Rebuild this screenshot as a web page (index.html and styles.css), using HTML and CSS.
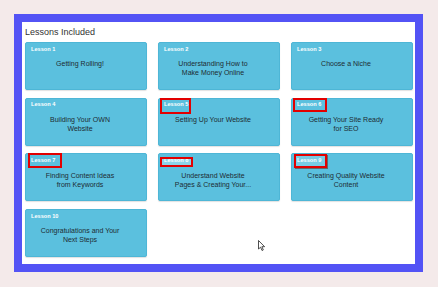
FILE: index.html
```html
<!DOCTYPE html>
<html lang="en">
<head>
    <meta charset="UTF-8">
    <title>Lessons Included</title>
    <link rel="stylesheet" href="styles.css">
</head>
<body>
    <div class="frame">
        <div class="panel">
            <h2>Lessons Included</h2>
            <div class="lessons">
                <div class="card">
                    <div class="label">Lesson 1</div>
                    <div class="title">Getting Rolling!</div>
                </div>
                <div class="card">
                    <div class="label">Lesson 2</div>
                    <div class="title">Understanding How to Make Money Online</div>
                </div>
                <div class="card">
                    <div class="label">Lesson 3</div>
                    <div class="title">Choose a Niche</div>
                </div>
                <div class="card">
                    <div class="label">Lesson 4</div>
                    <div class="title">Building Your OWN Website</div>
                </div>
                <div class="card">
                    <div class="label">Lesson 5</div>
                    <div class="title">Setting Up Your Website</div>
                    <span class="mark mark-5"></span>
                </div>
                <div class="card">
                    <div class="label">Lesson 6</div>
                    <div class="title">Getting Your Site Ready for SEO</div>
                    <span class="mark mark-6"></span>
                </div>
                <div class="card">
                    <div class="label">Lesson 7</div>
                    <div class="title">Finding Content Ideas from Keywords</div>
                    <span class="mark mark-7"></span>
                </div>
                <div class="card">
                    <div class="label">Lesson 8</div>
                    <div class="title">Understand Website Pages &amp; Creating Your...</div>
                    <span class="mark mark-8"></span>
                </div>
                <div class="card">
                    <div class="label">Lesson 9</div>
                    <div class="title">Creating Quality Website Content</div>
                    <span class="mark mark-9"></span>
                </div>
                <div class="card">
                    <div class="label">Lesson 10</div>
                    <div class="title">Congratulations and Your Next Steps</div>
                </div>
            </div>

            <!-- mouse pointer -->
            <svg class="cursor" width="8" height="12" viewBox="0 0 8 12">
                <path d="M0.5 0.5 L0.5 9 L2.6 7.2 L4 10.5 L5.3 9.9 L3.9 6.7 L6.6 6.7 Z" fill="#fff" stroke="#222" stroke-width="0.8"/>
            </svg>
        </div>
    </div>
</body>
</html>
```

FILE: styles.css
```css
* {
    margin: 0;
    padding: 0;
    box-sizing: border-box;
}

body {
    font-family: 'Liberation Sans', Arial, sans-serif;
    background: #f4eaea;
    width: 438px;
    height: 287px;
    overflow: hidden;
}

.frame {
    margin: 14px 0 0 14px;
    width: 409px;
    height: 258px;
    border: 8px solid #5353f5;
}

.panel {
    position: relative;
    height: 100%;
    background: #fff;
    padding: 4.5px 2px 0 3px;
}

h2 {
    font-size: 9px;
    line-height: 11px;
    font-weight: normal;
    color: #333;
    margin-bottom: 4.5px;
}

.lessons {
    display: grid;
    grid-template-columns: repeat(3, 122px);
    grid-auto-rows: 48px;
    column-gap: 11px;
    row-gap: 7.7px;
}

.card {
    position: relative;
    background: #5bc0de;
    border: 1px solid #4eb6d6;
    border-radius: 2px;
    box-shadow: 0 1px 1px rgba(0, 0, 0, 0.12);
    padding: 2.5px 5px 0 5px;
}

.label {
    font-size: 5.6px;
    line-height: 7px;
    font-weight: bold;
    color: #fff;
}

.title {
    width: 81px;
    margin: 6.7px 0 0 8.5px;
    font-size: 7px;
    line-height: 9px;
    color: #1e2c33;
    text-align: center;
}

/* red annotation boxes drawn over the labels */
.mark {
    position: absolute;
    border: 2px solid #e20000;
}

.mark-5 { left: 1px; top: -0.5px; width: 31px; height: 16px; }
.mark-6 { left: 1.3px; top: -1px; width: 34px; height: 14.5px; }
.mark-7 { left: 2.3px; top: -1px; width: 34px; height: 14.5px; }
.mark-8 {
    left: 1px;
    top: 3px;
    width: 33px;
    height: 9.5px;
    background: rgba(255, 255, 255, 0.3);
}
.mark-9 {
    left: 2px;
    top: -0.3px;
    width: 33px;
    height: 13.5px;
    background: rgba(255, 255, 255, 0.18);
    box-shadow: 1px 1px 0 #666;
}

.cursor {
    position: absolute;
    left: 236px;
    top: 218px;
}
```
